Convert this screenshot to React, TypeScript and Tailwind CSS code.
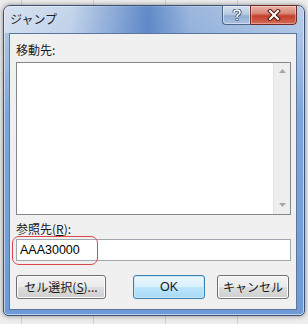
import type { ReactNode } from "react";

function Caption() {
  return (
    <div className="flex -mt-px">
      <div className="w-[28px] h-[20px] border border-[#4b6487] border-r-0 rounded-bl-[4px] flex items-center justify-center bg-[linear-gradient(to_bottom,#d4e0ee_0%,#b8cbe2_45%,#93aed2_55%,#a9c2e2_100%)] shadow-[inset_0_0_0_1px_rgba(255,255,255,0.45)]">
        <svg width="10" height="12" viewBox="0 0 10 12">
          <path
            d="M2 3.5 Q2 1 5 1 Q8 1 8 3.5 Q8 5 6 6 Q5 6.6 5 8"
            fill="none"
            stroke="#34465f"
            strokeWidth="3.2"
          />
          <path
            d="M2 3.5 Q2 1 5 1 Q8 1 8 3.5 Q8 5 6 6 Q5 6.6 5 8"
            fill="none"
            stroke="#fff"
            strokeWidth="1.6"
          />
          <rect x="3.6" y="9" width="2.8" height="2.8" fill="#34465f" />
          <rect x="4.2" y="9.6" width="1.6" height="1.6" fill="#fff" />
        </svg>
      </div>
      <div className="w-[47px] h-[20px] border border-[#6e2a24] rounded-br-[4px] flex items-center justify-center bg-[linear-gradient(to_bottom,#e8b1a6_0%,#d98a7b_40%,#c3402d_55%,#d66a55_100%)] shadow-[inset_0_0_0_1px_rgba(255,255,255,0.35)]">
        <svg width="14" height="12" viewBox="0 0 14 12">
          <path d="M3 2 L11 10 M11 2 L3 10" stroke="#4a1a14" strokeWidth="4" strokeLinecap="square" />
          <path d="M3 2 L11 10 M11 2 L3 10" stroke="#fff" strokeWidth="2" strokeLinecap="square" />
        </svg>
      </div>
    </div>
  );
}

function Btn({ children, w, focus }: { children: ReactNode; w: string; focus?: boolean }) {
  return (
    <div
      className={
        w +
        " h-[24px] rounded-[3px] border flex items-center justify-center text-[12px] leading-[16px] text-[#1a1a1a] " +
        (focus
          ? "border-[#3c7fb1] bg-[linear-gradient(to_bottom,#eaf6fd_0%,#d9f0fc_50%,#bee6fd_51%,#a7d9f5_100%)] shadow-[inset_0_0_0_1px_#c9e8fa]"
          : "border-[#707070] bg-[linear-gradient(to_bottom,#f2f2f2_0%,#ebebeb_50%,#dddddd_51%,#cfcfcf_100%)] shadow-[inset_0_0_0_1px_#fcfcfc]")
      }
    >
      {children}
    </div>
  );
}

function Arrow({ up }: { up?: boolean }) {
  return (
    <svg width="7" height="4" viewBox="0 0 7 4">
      <path d={up ? "M0 4 L3.5 0 L7 4 Z" : "M0 0 L3.5 4 L7 0 Z"} fill="#a8a8a8" />
    </svg>
  );
}

export default function App() {
  return (
    <div className="w-[308px] h-[324px] overflow-hidden bg-[#ededed] bg-[repeating-linear-gradient(90deg,transparent_0_21px,#cfcfcf_21px_22px,transparent_22px_72px)] pt-[5px] pl-[3px] font-['Noto_Sans_CJK_JP',sans-serif]">
      <div className="w-[302px] h-[311px] rounded-t-[7px] rounded-b-[5px] border border-[#3d5373] flex flex-col bg-[linear-gradient(to_bottom,#b8cce6_0%,#a3bee3_15%,#7da5dc_35%,#6e9ad8_100%)] shadow-[0_0_5px_rgba(0,0,0,0.45),inset_0_0_0_1px_rgba(255,255,255,0.55)]">
        <div className="h-[27px] flex justify-between items-start pl-[6px] pr-[7px] rounded-t-[6px] bg-[linear-gradient(90deg,rgba(235,240,247,0.6)_0%,rgba(220,230,243,0.4)_22%,rgba(40,95,180,0.6)_48%,rgba(90,135,200,0.3)_62%,rgba(190,210,235,0.25)_100%)]">
          <div className="mt-[5px] text-[12px] leading-[16px] text-[#1e1e1e]">ジャンプ</div>
          <Caption />
        </div>
        <div className="ml-[5px] w-[288px] h-[277px] border border-[#5d769b] bg-[#f0f0f0] pl-[6px] pr-[5px] pt-[8px]">
          <div className="text-[12px] leading-[16px] text-[#1a1a1a]">移動先:</div>
          <div className="mt-[4px] h-[153px] border border-[#828790] bg-white flex justify-end">
            <div className="w-[17px] h-full bg-[#eeeeee] border-l border-[#e3e3e3] flex flex-col items-center justify-between pt-[6px] pb-[7px]">
              <Arrow up />
              <Arrow />
            </div>
          </div>
          <div className="mt-[6px] text-[12px] leading-[16px] text-[#1a1a1a]">
            参照先(<span className="underline">R</span>):
          </div>
          <div className="relative mt-[2px] h-[22px] border border-[#a3a8b0] bg-white pl-[3px] flex items-center font-['Liberation_Sans',sans-serif] text-[12.5px] text-black">
            AAA30000
            <div className="absolute left-[-5px] top-[-4px] w-[86px] h-[29px] rounded-[7px] border border-[#d9474a]" />
          </div>
          <div className="mt-[14px] flex">
            <Btn w="w-[90px]">
              セル選択(<span className="underline">S</span>)...
            </Btn>
            <div className="ml-[27px]">
              <Btn w="w-[72px]" focus>
                <span className="font-['Liberation_Sans',sans-serif] text-[12.5px]">OK</span>
              </Btn>
            </div>
            <div className="ml-[12px]">
              <Btn w="w-[72px]">キャンセル</Btn>
            </div>
          </div>
        </div>
      </div>
    </div>
  );
}
